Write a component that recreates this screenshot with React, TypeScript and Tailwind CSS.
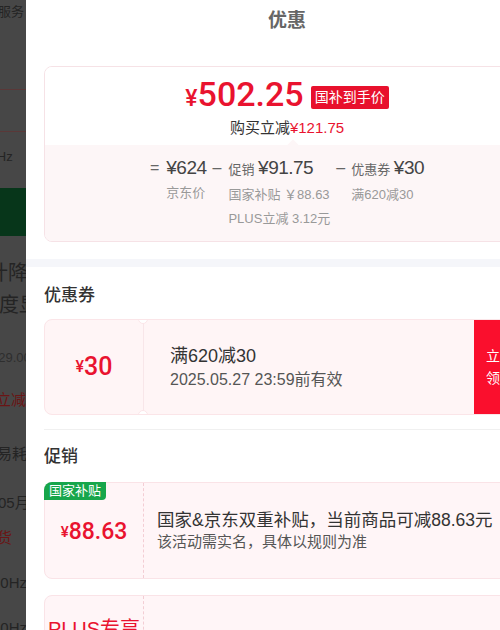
import React from 'react';

// Dimmed product page peeking out on the left of the sheet
function BackdropStrip() {
  return (
    <div className="w-[26px] shrink-0 h-full overflow-hidden bg-[#474747] text-[#242424] whitespace-nowrap flex flex-col">
      <div className="h-[89px] shrink-0 pt-[3px] text-[13px] leading-[18px] -ml-[2px]">服务</div>
      <div className="h-[42px] shrink-0 border-t border-[#5a3838]" />
      <div className="h-[57px] shrink-0 border-t border-[#5a3838] pt-[16px] text-[13px] leading-[18px] -ml-[14px]">MHz</div>
      <div className="h-[48px] shrink-0 bg-[#07361a]" />
      <div className="pt-[24px] text-[20px] leading-[26px] -ml-[32px]">预计降价</div>
      <div className="mt-[6px] text-[20px] leading-[26px] -ml-[1px]">度显</div>
      <div className="mt-[31px] text-[13px] leading-[18px] -ml-[9px] text-[#2e2e2e]">529.00</div>
      <div className="mt-[23px] text-[15px] leading-[20px] -ml-[4px] text-[#6a1515]">立减</div>
      <div className="mt-[34px] text-[15px] leading-[20px] -ml-[3px]">易耗</div>
      <div className="mt-[29px] text-[15px] leading-[20px] -ml-[2px]">05月</div>
      <div className="mt-[15px] text-[15px] leading-[20px] -ml-[3px] text-[#6a1515]">货</div>
      <div className="mt-[25px] text-[15px] leading-[20px] -ml-[8px]">60Hz,</div>
      <div className="mt-[25px] text-[15px] leading-[20px] -ml-[8px]">60Hz</div>
    </div>
  );
}

function Op({ children }: { children: React.ReactNode }) {
  return <span className="text-[16px] leading-[26px] text-[#666]">{children}</span>;
}

function PriceCard() {
  return (
    <div className="rounded-[8px] border border-[#f6e2e6] overflow-hidden">
      <div className="relative bg-white h-[78px] pt-[10px] flex flex-col items-center">
        <div className="flex items-center h-[40px]">
          <span className="text-[#e9132f] font-['Roboto','Liberation_Sans',sans-serif] font-medium leading-[40px]">
            <span className="text-[23px]">¥</span>
            <span className="text-[34px]">502.25</span>
          </span>
          <span className="ml-[7px] bg-[#e8112d] text-white text-[14px] leading-[23px] h-[23px] px-[4px] rounded-[2px]">
            国补到手价
          </span>
        </div>
        <div className="mt-[1px] text-[15px] leading-[20px] text-[#333]">
          购买立减<span className="text-[#e9132f]">¥121.75</span>
        </div>
        <span className="absolute bottom-[-4px] left-[244px] w-[8px] h-[8px] rotate-45 bg-[#fdf6f7]" />
      </div>
      <div className="bg-[#fdf6f7] h-[96px] pt-[10px] flex justify-center items-start gap-[6px] text-[13px] text-[#999]">
        <Op>=</Op>
        <div className="flex flex-col ml-[1px]">
          <span className="text-[19px] leading-[26px] tracking-[-0.5px] text-[#444]">¥624</span>
          <span className="leading-[24px]">京东价</span>
        </div>
        <Op>–</Op>
        <div className="flex flex-col ml-[1px]">
          <span className="leading-[26px] text-[#666]">
            促销 <span className="text-[19px] tracking-[-0.5px] text-[#444]">¥91.75</span>
          </span>
          <span className="leading-[24px]">国家补贴 ￥88.63</span>
          <span className="leading-[24px]">PLUS立减 3.12元</span>
        </div>
        <Op>–</Op>
        <div className="flex flex-col">
          <span className="leading-[26px] text-[#666]">
            优惠券 <span className="text-[19px] tracking-[-0.5px] text-[#444]">¥30</span>
          </span>
          <span className="leading-[24px]">满620减30</span>
        </div>
      </div>
    </div>
  );
}

function Coupon() {
  return (
    <div className="relative mt-[11px] h-[96px] rounded-[8px] border border-[#fbe5e8] bg-[#fff5f6] flex overflow-hidden">
      <div className="w-[98px] shrink-0 flex items-center justify-center text-[#e9132f] font-['Roboto','Liberation_Sans',sans-serif] font-medium">
        <span className="text-[16px]">¥</span>
        <span className="text-[25px]">30</span>
      </div>
      <div className="flex-1 border-l border-[#f8e6e9] pl-[26px] flex flex-col justify-center">
        <span className="text-[18px] leading-[26px] text-[#333]">满620减30</span>
        <span className="text-[16px] leading-[22px] text-[#555]">2025.05.27 23:59前有效</span>
      </div>
      <div className="w-[55px] shrink-0 bg-[#fa0f2d] text-white text-[14px] leading-[22px] pl-[12px] flex flex-col justify-center">
        <span>立</span>
        <span>领</span>
      </div>
      <span className="absolute -top-[6px] left-[93px] w-[10px] h-[10px] rounded-full bg-white border border-[#fbe5e8]" />
      <span className="absolute -bottom-[6px] left-[93px] w-[10px] h-[10px] rounded-full bg-white border border-[#fbe5e8]" />
    </div>
  );
}

function Promo() {
  return (
    <div className="relative mt-[13px] h-[97px] rounded-[8px] border border-[#fae3e7] bg-[#fff5f7] flex">
      <span className="absolute -top-px -left-px h-[18px] px-[5px] bg-[#17a64b] text-white text-[13px] leading-[18px] rounded-tl-[8px] rounded-br-[4px]">
        国家补贴
      </span>
      <div className="w-[98px] shrink-0 flex items-center justify-center pt-[4px] text-[#e9132f] font-['Roboto','Liberation_Sans',sans-serif] font-medium">
        <span className="text-[15px]">¥</span>
        <span className="text-[23px]">88.63</span>
      </div>
      <div className="flex-1 border-l border-dashed border-[#f3cdd4] pl-[13px] flex flex-col justify-center">
        <span className="text-[17.5px] leading-[22px] text-[#333]">国家&amp;京东双重补贴，当前商品可减88.63元</span>
        <span className="text-[15px] leading-[22px] text-[#555]">该活动需实名，具体以规则为准</span>
      </div>
    </div>
  );
}

function PlusCard() {
  return (
    <div className="mt-[16px] h-[97px] rounded-[8px] border border-[#fae3e7] bg-[#fff5f7] flex">
      <div className="w-[98px] shrink-0 pt-[21px] text-center text-[20px] leading-[24px] text-[#e9132f]">PLUS专享</div>
      <div className="flex-1 border-l border-dashed border-[#f3cdd4]" />
    </div>
  );
}

export default function App() {
  return (
    <div className="flex w-[500px] h-[630px] overflow-hidden font-['Liberation_Sans','Noto_Sans_CJK_SC',sans-serif]">
      <BackdropStrip />
      <div className="w-[522px] shrink-0 h-full bg-white">
        <header className="h-[42px] flex items-center justify-center text-[19px] font-bold text-[#666]">优惠</header>
        <section className="px-[18px] pt-[24px] pb-[17px]">
          <PriceCard />
        </section>
        <div className="h-[8px] bg-[#f5f6fa]" />
        <section className="px-[18px] pt-[17px]">
          <h3 className="text-[17px] leading-[24px] font-medium text-[#333]">优惠券</h3>
          <Coupon />
          <div className="mt-[14px] h-px bg-[#f0f0f0]" />
          <h3 className="mt-[15px] text-[17px] leading-[24px] font-medium text-[#333]">促销</h3>
          <Promo />
          <PlusCard />
        </section>
      </div>
    </div>
  );
}
